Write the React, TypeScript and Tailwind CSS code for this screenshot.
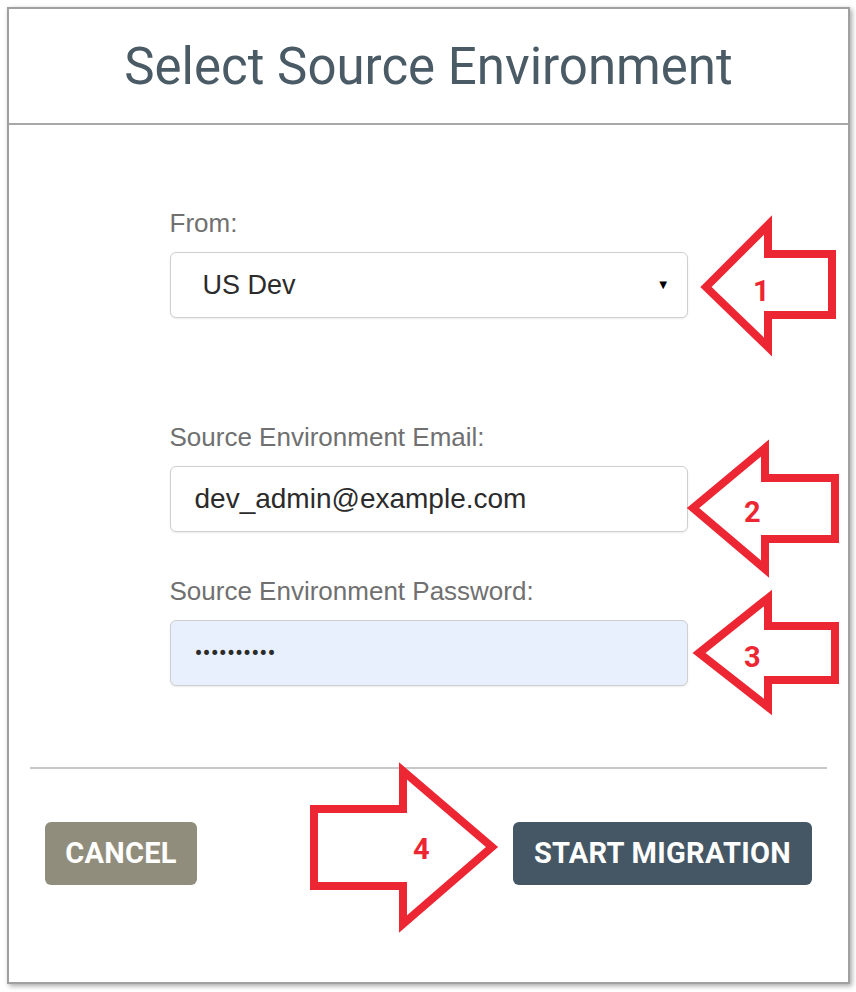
import React from 'react';

const Arrows: React.FC = () => {
  const stroke = '#ec2733';
  return (
    <svg className="pointer-events-none absolute left-0 top-0" width={856} height={992} viewBox="0 0 856 992">
      <g fill="none" stroke={stroke} strokeWidth={8} strokeLinejoin="miter">
        {/* 1 */}
        <polygon points="706,287 768,225 768,254 832,254 832,315 768,315 768,347" />
        {/* 2 */}
        <polygon points="693,508 765,448 765,478 835,478 835,539 765,539 765,569" />
        {/* 3 */}
        <polygon points="699,653 768,598 768,626 835,626 835,680 768,680 768,707" />
        {/* 4 */}
        <polygon points="314,809 403,809 403,771 492,847 403,924 403,886 314,886" />
      </g>
      <g fill={stroke} fontFamily="Roboto, 'Liberation Sans', sans-serif" fontWeight={700} fontSize={29}>
        <text x={753} y={301}>1</text>
        <text x={744} y={522}>2</text>
        <text x={744} y={667}>3</text>
        <text x={413} y={859}>4</text>
      </g>
    </svg>
  );
};

export default function App() {
  const sans = "'Liberation Sans', Arial, sans-serif";
  return (
    <div className="relative h-[992px] w-[856px] bg-white p-[7px]" style={{ fontFamily: "Roboto, 'Liberation Sans', sans-serif" }}>
      <div className="flex h-[977px] w-[843px] flex-col border-2 border-[#a0a0a0] bg-white shadow-[2px_2px_5px_rgba(0,0,0,0.35)]">
        {/* Header */}
        <div className="flex h-[116px] items-center justify-center border-b-2 border-[#a8a8a8]">
          <h1 className="text-[51px] font-normal leading-none text-[#4a5b66]">Select Source Environment</h1>
        </div>

        {/* Form */}
        <div className="mx-auto flex w-[518px] flex-col pt-[86px] font-['Liberation_Sans',Arial,sans-serif]">
          <label className="mb-[17px] text-[26px] leading-[24px] text-[#707070]">From:</label>
          <div className="flex h-[66px] items-center justify-between rounded-md border border-[#cfcfcf] bg-white pl-[32px] pr-[17px] shadow-[0_1px_2px_rgba(0,0,0,0.08)]">
            <span className="text-[27px] text-[#2b2b2b]">US Dev</span>
            <span className="text-[13px] text-black">▼</span>
          </div>

          <label className="mb-[17px] mt-[107px] text-[26px] leading-[24px] text-[#707070]">Source Environment Email:</label>
          <input
            readOnly
            value="dev_admin@example.com"
            style={{ fontFamily: sans }}
            className="h-[66px] rounded-md border border-[#cfcfcf] bg-white px-[24px] text-[28px] text-[#2b2b2b] outline-none shadow-[0_1px_2px_rgba(0,0,0,0.08)]"
          />

          <label className="mb-[17px] mt-[47px] text-[26px] leading-[24px] text-[#707070]">Source Environment Password:</label>
          <input
            readOnly
            type="password"
            value="password12"
            className="h-[66px] rounded-md border border-[#cfcfcf] bg-[#e8f0fe] px-[24px] font-['Roboto',sans-serif] text-[24px] text-[#2b2b2b] outline-none shadow-[0_1px_2px_rgba(0,0,0,0.08)]"
          />
        </div>

        {/* Footer */}
        <div className="mx-[21px] mt-[81px] h-[2px] bg-[#c8c8c8]" />
        <div className="mt-[53px] flex items-center justify-between pl-[36px] pr-[36px]">
          <button className="h-[63px] w-[152px] rounded-md bg-[#918d7c] text-[29px] font-bold tracking-[0.01em] text-white">
            CANCEL
          </button>
          <button className="h-[63px] w-[299px] rounded-md bg-[#455765] text-[29px] font-bold tracking-[0.01em] text-white">
            START MIGRATION
          </button>
        </div>
      </div>
      <Arrows />
    </div>
  );
}
